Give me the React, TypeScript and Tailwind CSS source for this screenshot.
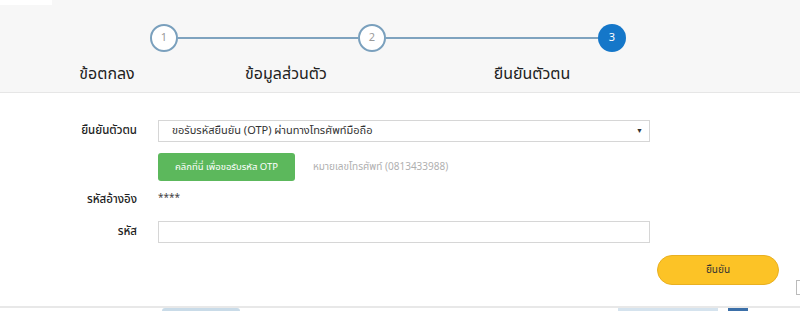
import React from 'react';

const font = "font-['Noto_Sans_Thai','Noto_Sans','Liberation_Sans',sans-serif]";

function Circle({ n, active }: { n: number; active?: boolean }) {
  return (
    <div
      className={
        active
          ? 'w-[28px] h-[28px] rounded-full bg-[#1577c9] text-white text-[11px] flex items-center justify-center shrink-0'
          : 'w-[28px] h-[28px] rounded-full border-2 border-[#7aa0bd] bg-white text-[#9a9a9a] text-[11px] flex items-center justify-center shrink-0'
      }
    >
      {n}
    </div>
  );
}

export default function App() {
  return (
    <div className={`w-[800px] h-[311px] overflow-hidden bg-white text-[#222] ${font}`}>
      <div className="relative h-[93px] bg-[#f7f7f7] border-b border-[#e6e6e6]">
        <div className="absolute left-0 top-0 w-[52px] h-[5px] bg-white" />
        <div className="flex items-center pt-[24px] pl-[150px]">
          <Circle n={1} />
          <div className="w-[180px] h-[2px] bg-[#7fa3bf]" />
          <Circle n={2} />
          <div className="w-[212px] h-[2px] bg-[#7fa3bf]" />
          <Circle n={3} active />
        </div>
        <div className="flex mt-[11px] text-[16px] leading-[22px] text-[#222]">
          <div className="w-[214px] text-center">ข้อตกลง</div>
          <div className="w-[144px] text-center">ข้อมูลส่วนตัว</div>
          <div className="w-[348px] text-center">ยืนยันตัวตน</div>
        </div>
      </div>

      <div className="h-[213px] pt-[27px]">
        <div className="flex items-center h-[22px]">
          <div className="w-[137px] text-right text-[11.5px] font-medium">ยืนยันตัวตน</div>
          <div className="ml-[21px] w-[492px] h-[22px] border border-[#d6d6d6] flex items-center justify-between pl-[13px] pr-[6px]">
            <span className="text-[11px] text-[#333]">ขอรับรหัสยืนยัน (OTP) ผ่านทางโทรศัพท์มือถือ</span>
            <span className="text-[7px] text-[#333]">▼</span>
          </div>
        </div>

        <div className="flex items-center mt-[11px] h-[28px]">
          <button className="ml-[158px] w-[137px] h-[28px] rounded-[3px] bg-[#5cb85c] text-white text-[9.5px]">
            คลิกที่นี่ เพื่อขอรับรหัส OTP
          </button>
          <span className="ml-[18px] text-[10px] text-[#b0b0b0]">หมายเลขโทรศัพท์ (0813433988)</span>
        </div>

        <div className="flex items-center mt-[9px] h-[20px]">
          <div className="w-[137px] text-right text-[11.5px] font-medium">รหัสอ้างอิง</div>
          <div className="ml-[21px] text-[10px] text-[#444] -mt-[4px]">****</div>
        </div>

        <div className="flex items-center mt-[11px] h-[22px]">
          <div className="w-[137px] text-right text-[11.5px] font-medium">รหัส</div>
          <div className="ml-[21px] w-[492px] h-[22px] border border-[#d6d6d6]" />
        </div>

        <div className="flex items-start mt-[12px]">
          <button className="ml-[657px] w-[122px] h-[30px] shrink-0 rounded-full bg-[#fcc326] border border-[#e9b021] text-[10px] text-[#333]">
            ยืนยัน
          </button>
          <div className="ml-[17px] mt-[25px] w-[8px] h-[15px] shrink-0 border border-[#bbb] bg-white" />
        </div>
      </div>

      <div className="h-[5px] border-t-2 border-[#e8e8e8] bg-white flex">
        <div className="ml-[162px] w-[78px] h-[3px] bg-[#c9dbe8] rounded-t-[4px]" />
        <div className="ml-[378px] w-[100px] h-[3px] bg-[#d5e3ee]" />
        <div className="ml-[10px] w-[20px] h-[3px] bg-[#3b6fa8]" />
      </div>
    </div>
  );
}
